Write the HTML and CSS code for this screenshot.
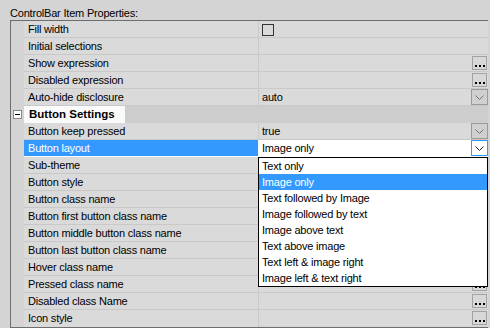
FILE: index.html
```html
<!DOCTYPE html>
<html lang="en">
<head>
    <meta charset="UTF-8">
    <title>ControlBar Item Properties</title>
    <link rel="stylesheet" href="styles.css">
</head>
<body>
    <div class="panel">
        <div class="title">ControlBar Item Properties:</div>

        <div class="grid">
            <div class="row">
                <div class="gut"></div>
                <div class="name">Fill width</div>
                <div class="val"><span class="check"></span></div>
            </div>
            <div class="row">
                <div class="gut"></div>
                <div class="name">Initial selections</div>
                <div class="val"></div>
            </div>
            <div class="row">
                <div class="gut"></div>
                <div class="name">Show expression</div>
                <div class="val"><span class="dots"><svg width="13" height="12" viewBox="0 0 13 12"><rect x="2" y="8" width="2" height="2"/><rect x="6" y="8" width="2" height="2"/><rect x="10" y="8" width="2" height="2"/></svg></span></div>
            </div>
            <div class="row">
                <div class="gut"></div>
                <div class="name">Disabled expression</div>
                <div class="val"><span class="dots"><svg width="13" height="12" viewBox="0 0 13 12"><rect x="2" y="8" width="2" height="2"/><rect x="6" y="8" width="2" height="2"/><rect x="10" y="8" width="2" height="2"/></svg></span></div>
            </div>
            <div class="row">
                <div class="gut"></div>
                <div class="name">Auto-hide disclosure</div>
                <div class="val">auto<span class="drop"><svg width="9" height="5" viewBox="0 0 9 5"><polyline points="0.5,0.5 4.5,4.5 8.5,0.5"/></svg></span></div>
            </div>

            <!-- categoria -->
            <div class="row cat">
                <div class="gut"><span class="minus"></span></div>
                <div class="cat-name">Button Settings</div>
                <div class="cat-rest"></div>
            </div>

            <div class="row">
                <div class="gut"></div>
                <div class="name">Button keep pressed</div>
                <div class="val">true<span class="drop"><svg width="9" height="5" viewBox="0 0 9 5"><polyline points="0.5,0.5 4.5,4.5 8.5,0.5"/></svg></span></div>
            </div>
            <div class="row selected">
                <div class="gut"></div>
                <div class="name">Button layout</div>
                <div class="val">Image only<span class="drop focus"><svg width="9" height="5" viewBox="0 0 9 5"><polyline points="0.5,0.5 4.5,4.5 8.5,0.5"/></svg></span></div>
            </div>
            <div class="row">
                <div class="gut"></div>
                <div class="name">Sub-theme</div>
                <div class="val"></div>
            </div>
            <div class="row">
                <div class="gut"></div>
                <div class="name">Button style</div>
                <div class="val"></div>
            </div>
            <div class="row">
                <div class="gut"></div>
                <div class="name">Button class name</div>
                <div class="val"></div>
            </div>
            <div class="row">
                <div class="gut"></div>
                <div class="name">Button first button class name</div>
                <div class="val"></div>
            </div>
            <div class="row">
                <div class="gut"></div>
                <div class="name">Button middle button class name</div>
                <div class="val"></div>
            </div>
            <div class="row">
                <div class="gut"></div>
                <div class="name">Button last button class name</div>
                <div class="val"></div>
            </div>
            <div class="row">
                <div class="gut"></div>
                <div class="name">Hover class name</div>
                <div class="val"></div>
            </div>
            <div class="row">
                <div class="gut"></div>
                <div class="name">Pressed class name</div>
                <div class="val"><span class="dots"><svg width="13" height="12" viewBox="0 0 13 12"><rect x="2" y="8" width="2" height="2"/><rect x="6" y="8" width="2" height="2"/><rect x="10" y="8" width="2" height="2"/></svg></span></div>
            </div>
            <div class="row">
                <div class="gut"></div>
                <div class="name">Disabled class Name</div>
                <div class="val"><span class="dots"><svg width="13" height="12" viewBox="0 0 13 12"><rect x="2" y="8" width="2" height="2"/><rect x="6" y="8" width="2" height="2"/><rect x="10" y="8" width="2" height="2"/></svg></span></div>
            </div>
            <div class="row last">
                <div class="gut"></div>
                <div class="name">Icon style</div>
                <div class="val"><span class="dots"><svg width="13" height="12" viewBox="0 0 13 12"><rect x="2" y="8" width="2" height="2"/><rect x="6" y="8" width="2" height="2"/><rect x="10" y="8" width="2" height="2"/></svg></span></div>
            </div>

            <!-- lista aberta do Button layout -->
            <ul class="list">
                <li>Text only</li>
                <li class="on">Image only</li>
                <li>Text followed by Image</li>
                <li>Image followed by text</li>
                <li>Image above text</li>
                <li>Text above image</li>
                <li>Text left &amp; image right</li>
                <li>Image left &amp; text right</li>
            </ul>
        </div>
    </div>
</body>
</html>
```

FILE: styles.css
```css
/* Grade de propriedades */
body {
    margin: 0;
    background-color: #d4d4d4;
    font-family: "Liberation Sans", Arial, sans-serif;
    font-size: 11px;
    letter-spacing: -0.2px;
    color: #000;
}

.panel {
    width: 490px;
    height: 328px;
    overflow: hidden;
}

.title {
    height: 20px;
    box-sizing: border-box;
    padding: 5px 0 0 10px;
    line-height: 16px;
}

.grid {
    position: relative;
    margin-left: 10px;
    width: 477px;
    border-top: 1px solid #6e6e6e;
    border-left: 1px solid #6e6e6e;
    border-bottom: 1px solid #6e6e6e;
}

.row {
    display: flex;
    height: 17px;
}

.gut {
    width: 13px;
    flex: none;
    position: relative;
}

.name {
    width: 235px;
    flex: none;
    box-sizing: border-box;
    padding-left: 4px;
    line-height: 16px;
    background-color: #dadada;
    border-bottom: 1px solid #c9c9c9;
    border-right: 1px solid #c9c9c9;
    white-space: nowrap;
}

.val {
    flex: 1;
    display: flex;
    align-items: center;
    padding-left: 3px;
    height: 16px;
    line-height: 16px;
    background-color: #dadada;
    border-bottom: 1px solid #c9c9c9;
    position: relative;
}

.row.last .name,
.row.last .val {
    border-bottom: none;
}

.check {
    width: 10px;
    height: 10px;
    border: 1px solid #333;
    margin-top: 1px;
}

.dots {
    position: absolute;
    right: 1px;
    top: 1px;
    width: 13px;
    height: 12px;
    border: 1px solid #a2a2a2;
    background-color: #d8d8d8;
}

.dots svg {
    display: block;
    fill: #000;
}

.drop {
    position: absolute;
    right: 0;
    top: 0;
    width: 15px;
    height: 14px;
    border: 1px solid #9a9a9a;
    background-color: #d0d0d0;
    display: flex;
    align-items: center;
    justify-content: center;
}

.drop svg {
    display: block;
    fill: none;
    stroke: #707070;
    stroke-width: 1;
}

.drop.focus {
    border-color: #3399ff;
    background-color: #fff;
}

.drop.focus svg {
    stroke: #222;
}

/* linha de categoria */
.cat-name {
    width: 101px;
    flex: none;
    box-sizing: border-box;
    padding-left: 5px;
    font-weight: bold;
    font-size: 11.5px;
    letter-spacing: 0;
    line-height: 17px;
    background-color: #fafafa;
}

.cat-rest {
    flex: 1;
    background-color: #cdcdcd;
}

.minus {
    position: absolute;
    left: 2px;
    top: 4px;
    width: 7px;
    height: 7px;
    border: 1px solid #8a8a8a;
    background-color: #fff;
}

.minus::after {
    content: "";
    position: absolute;
    left: 1px;
    top: 3px;
    width: 5px;
    height: 1px;
    background-color: #000;
}

/* linha selecionada */
.row.selected .name {
    background-color: #3399ff;
    color: #fff;
    border-bottom-color: #fff;
    border-right-color: #fff;
}

.row.selected .val {
    background-color: #fff;
    border-bottom-color: #fff;
}

/* lista suspensa */
.list {
    position: absolute;
    left: 247px;
    top: 136px;
    width: 228px;
    margin: 0;
    padding: 0;
    list-style: none;
    border: 1px solid #000;
    background-color: #fff;
}

.list li {
    height: 16px;
    line-height: 16px;
    padding-left: 3px;
    white-space: nowrap;
}

.list li.on {
    background-color: #3399ff;
    color: #fff;
}
```
